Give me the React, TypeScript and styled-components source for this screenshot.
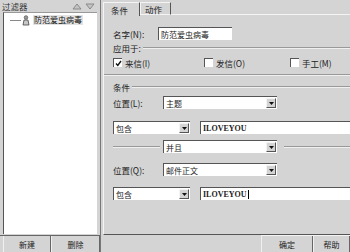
import * as React from "react";
import styled, { createGlobalStyle } from "styled-components";

const Global = createGlobalStyle`
  html, body {
    margin: 0;
    padding: 0;
    background: #d4d4d4;
  }
  body {
    font-family: "Noto Sans CJK SC", "Noto Sans", sans-serif;
    font-size: 8.5px;
    color: #222;
  }
`;

function Arrow({ up }: { up?: boolean }) {
  return (
    <svg width="10" height="7" viewBox="0 0 10 7">
      <path
        d={up ? "M1 6 L5 1 L9 6 Z" : "M1 1 L5 6 L9 1 Z"}
        fill="#c4c4c4"
        stroke="#8a8a8a"
        strokeWidth="1"
      />
    </svg>
  );
}

function FilterIcon() {
  return (
    <svg width="9" height="11" viewBox="0 0 9 11">
      <circle cx="5" cy="2.5" r="1.8" fill="#9a9a9a" stroke="#555" strokeWidth="0.7" />
      <path d="M2 10 L3 5 L7 5 L8 10 Z" fill="#c8c8c8" stroke="#444" strokeWidth="0.8" />
    </svg>
  );
}

function Dropdown({ value, width }: { value: string; width: number }) {
  return (
    <Select $width={width}>
      <SelectText>{value}</SelectText>
      <SelectButton>
        <svg width="5" height="3" viewBox="0 0 5 3">
          <path d="M0 0 L5 0 L2.5 3 Z" fill="#111" />
        </svg>
      </SelectButton>
    </Select>
  );
}

function Check({ label, checked }: { label: string; checked?: boolean }) {
  return (
    <CheckItem>
      <Box>
        {checked && (
          <svg width="7" height="7" viewBox="0 0 7 7">
            <path d="M1 3.5 L2.8 5.5 L6 1" fill="none" stroke="#111" strokeWidth="1.4" />
          </svg>
        )}
      </Box>
      <span>{label}</span>
    </CheckItem>
  );
}

export default function App() {
  return (
    <>
      <Global />
      <Window>
        <LeftPane>
          <PaneHeader>
            <span>过滤器</span>
            <Arrows>
              <Arrow up />
              <Arrow />
            </Arrows>
          </PaneHeader>
          <Tree>
            <TreeItem>
              <Branch />
              <FilterIcon />
              <ItemLabel>防范爱虫病毒</ItemLabel>
            </TreeItem>
          </Tree>
          <ButtonBar>
            <BarButton $width={48}>新建</BarButton>
            <BarButton $width={49}>删除</BarButton>
          </ButtonBar>
        </LeftPane>

        <RightPane>
          <Tabs>
            <Tab $active>条件</Tab>
            <Tab>动作</Tab>
            <TabFill />
          </Tabs>
          <Panel>
            <Row $top={12}>
              <Label $width={45}>名字(N):</Label>
              <TextBox $width={74}>防范爱虫病毒</TextBox>
            </Row>
            <GroupHeader $top={3}>
              <span>应用于:</span>
              <GroupLine />
            </GroupHeader>
            <Row $top={3}>
              <CheckCell $width={91}>
                <Check label="来信(I)" checked />
              </CheckCell>
              <CheckCell $width={86}>
                <Check label="发信(O)" />
              </CheckCell>
              <CheckCell $width={60}>
                <Check label="手工(M)" />
              </CheckCell>
            </Row>
            <Separator $top={5} />
            <GroupHeader $top={6}>
              <span>条件</span>
              <GroupLine />
            </GroupHeader>
            <Row $top={4}>
              <Label $width={50}>位置(L):</Label>
              <Dropdown value="主题" width={114} />
            </Row>
            <Row $top={12}>
              <Dropdown value="包含" width={77} />
              <Spacer $width={10} />
              <TextBox $grow $serif>
                ILOVEYOU
              </TextBox>
            </Row>
            <Row $top={6}>
              <HLine $width={47} />
              <Spacer $width={3} />
              <Dropdown value="并且" width={114} />
              <Spacer $width={7} />
              <HLine $grow />
            </Row>
            <Row $top={10}>
              <Label $width={50}>位置(Q):</Label>
              <Dropdown value="邮件正文" width={114} />
            </Row>
            <Row $top={11}>
              <Dropdown value="包含" width={77} />
              <Spacer $width={10} />
              <TextBox $grow $serif>
                ILOVEYOU<Caret />
              </TextBox>
            </Row>
          </Panel>
          <BottomBar>
            <BarButton $width={52}>确定</BarButton>
            <BarButton $width={37}>帮助</BarButton>
          </BottomBar>
        </RightPane>
      </Window>
    </>
  );
}

const Window = styled.div`
  width: 350px;
  height: 252px;
  display: flex;
  overflow: hidden;
  background: #d4d4d4;
`;

const LeftPane = styled.div`
  width: 100px;
  display: flex;
  flex-direction: column;
  border-right: 1px solid #777;
`;

const PaneHeader = styled.div`
  height: 12px;
  display: flex;
  align-items: center;
  justify-content: space-between;
  padding: 0 5px 0 2px;
  font-size: 8.5px;
  color: #333;
`;

const Arrows = styled.div`
  display: flex;
  gap: 3px;
`;

const Tree = styled.div`
  flex: 1;
  margin: 0 3px 1px 3px;
  background: #fff;
  border-left: 1px solid #555;
  border-top: 1px solid #999;
`;

const TreeItem = styled.div`
  display: flex;
  align-items: center;
  height: 12px;
  padding-top: 1px;
  padding-left: 6px;
`;

const Branch = styled.div`
  width: 11px;
  border-top: 1px solid #888;
`;

const ItemLabel = styled.span`
  margin-left: 3px;
  padding: 0 1px;
  background: #e2e2e2;
  font-size: 8px;
  line-height: 10px;
  color: #111;
`;

const ButtonBar = styled.div`
  height: 16px;
  display: flex;
  border-top: 1px solid #666;
  padding-left: 3px;
`;

const BarButton = styled.div<{ $width: number }>`
  width: ${(p) => p.$width}px;
  display: flex;
  align-items: center;
  justify-content: center;
  border-right: 1px solid #666;
  border-left: 1px solid #f0f0f0;
  font-size: 8px;
  color: #222;
  box-sizing: border-box;
`;

const RightPane = styled.div`
  flex: 1;
  display: flex;
  flex-direction: column;
  min-width: 0;
`;

const Tabs = styled.div`
  height: 15px;
  display: flex;
  align-items: flex-end;
  padding-left: 2px;
`;

const Tab = styled.div<{ $active?: boolean }>`
  height: ${(p) => (p.$active ? 14 : 13)}px;
  padding: 0 ${(p) => (p.$active ? 11 : 8)}px 0 ${(p) => (p.$active ? 7 : 4)}px;
  display: flex;
  align-items: center;
  font-size: 8.5px;
  border-left: 1px solid #f4f4f4;
  border-top: 1px solid #f4f4f4;
  border-right: 1px solid #555;
  border-bottom: ${(p) => (p.$active ? "none" : "1px solid #f4f4f4")};
  box-sizing: border-box;
  margin-bottom: ${(p) => (p.$active ? -1 : 0)}px;
  background: #d4d4d4;
  position: relative;
`;

const TabFill = styled.div`
  flex: 1;
  border-bottom: 1px solid #f4f4f4;
`;

const Panel = styled.div`
  flex: 1;
  margin-left: 2px;
  border-left: 1px solid #f4f4f4;
  border-bottom: 1px solid #555;
  padding-left: 9px;
  display: flex;
  flex-direction: column;
`;

const Row = styled.div<{ $top: number }>`
  margin-top: ${(p) => p.$top}px;
  height: 13px;
  display: flex;
  align-items: center;
`;

const Label = styled.div<{ $width: number }>`
  width: ${(p) => p.$width}px;
  font-size: 8.5px;
  white-space: nowrap;
`;

const TextBox = styled.div<{ $width?: number; $grow?: boolean; $serif?: boolean }>`
  ${(p) => (p.$width ? `width: ${p.$width}px;` : "")}
  ${(p) => (p.$grow ? "flex: 1;" : "")}
  height: 13px;
  box-sizing: border-box;
  background: #fff;
  border-top: 1px solid #555;
  border-left: 1px solid #555;
  display: flex;
  align-items: center;
  padding-left: 2px;
  font-family: ${(p) =>
    p.$serif ? '"Liberation Serif", serif' : '"Noto Sans CJK SC", sans-serif'};
  font-size: ${(p) => (p.$serif ? 8 : 8)}px;
  font-weight: ${(p) => (p.$serif ? 700 : 400)};
  white-space: nowrap;
  overflow: hidden;
`;

const Caret = styled.span`
  display: inline-block;
  width: 1px;
  height: 9px;
  background: #000;
  margin-left: 1px;
`;

const Select = styled.div<{ $width: number }>`
  width: ${(p) => p.$width}px;
  height: 13px;
  box-sizing: border-box;
  background: #fff;
  border-top: 1px solid #555;
  border-left: 1px solid #555;
  display: flex;
  align-items: center;
  padding-right: 1px;
`;

const SelectText = styled.span`
  flex: 1;
  padding-left: 2px;
  font-size: 8px;
  white-space: nowrap;
`;

const SelectButton = styled.div`
  width: 10px;
  height: 10px;
  box-sizing: border-box;
  background: #d4d4d4;
  border-right: 1px solid #555;
  border-bottom: 1px solid #555;
  border-top: 1px solid #f4f4f4;
  border-left: 1px solid #f4f4f4;
  display: flex;
  align-items: center;
  justify-content: center;
`;

const GroupHeader = styled.div<{ $top: number }>`
  margin-top: ${(p) => p.$top}px;
  height: 10px;
  display: flex;
  align-items: center;
  gap: 2px;
  font-size: 8.5px;
`;

const GroupLine = styled.div`
  flex: 1;
  border-top: 1px solid #999;
  border-bottom: 1px solid #f0f0f0;
`;

const Separator = styled.div<{ $top: number }>`
  margin-top: ${(p) => p.$top}px;
  margin-left: -9px;
  border-top: 1px solid #999;
  border-bottom: 1px solid #f0f0f0;
`;

const CheckCell = styled.div<{ $width: number }>`
  width: ${(p) => p.$width}px;
  flex-shrink: 0;
`;

const CheckItem = styled.div`
  display: flex;
  align-items: center;
  gap: 3px;
  font-size: 8.5px;
  white-space: nowrap;
`;

const Box = styled.div`
  width: 9px;
  height: 9px;
  box-sizing: border-box;
  background: #fff;
  border-top: 1px solid #555;
  border-left: 1px solid #555;
  display: flex;
  align-items: center;
  justify-content: center;
`;

const Spacer = styled.div<{ $width: number }>`
  width: ${(p) => p.$width}px;
  flex-shrink: 0;
`;

const HLine = styled.div<{ $width?: number; $grow?: boolean }>`
  ${(p) => (p.$width ? `width: ${p.$width}px;` : "")}
  ${(p) => (p.$grow ? "flex: 1;" : "")}
  border-top: 1px solid #999;
  border-bottom: 1px solid #f0f0f0;
`;

const BottomBar = styled.div`
  height: 16px;
  display: flex;
  justify-content: flex-end;
  border-top: 1px solid #f4f4f4;
  margin-left: 160px;
`;
